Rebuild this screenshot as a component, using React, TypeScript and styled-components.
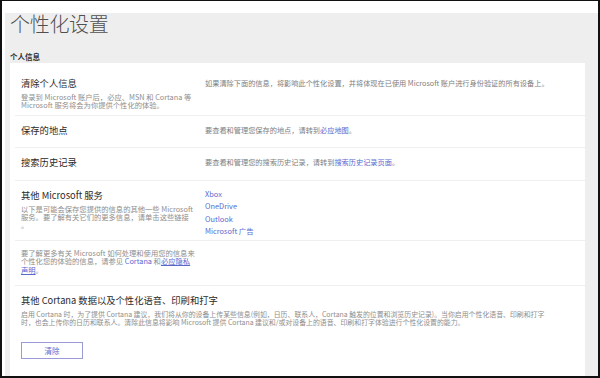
import React from "react";
import styled, { createGlobalStyle } from "styled-components";

const Global = createGlobalStyle`
  html, body { margin: 0; padding: 0; background: #fff; }
  body { font-family: "Noto Sans CJK SC", "Noto Sans", sans-serif; }
  * { box-sizing: border-box; }
`;

const Frame = styled.div`
  width: 600px;
  height: 378px;
  overflow: hidden;
  border-style: solid;
  border-color: #111;
  border-width: 1px 2px 2px 2px;
  background: #fff;
  padding: 12px 0 0 3px;
  display: flex;
`;

const Canvas = styled.div`
  flex: 1;
  background: #eeeeee;
  padding: 0 13px 0 5px;
  display: flex;
  flex-direction: column;
`;

const Title = styled.h1`
  margin: 0;
  font-size: 20px;
  line-height: 22px;
  font-weight: 300;
  color: #505050;
  letter-spacing: -0.3px;
`;

const Section = styled.div`
  margin-top: 17px;
  font-size: 7.5px;
  line-height: 10px;
  font-weight: 700;
  color: #333;
`;

const Panel = styled.div`
  margin-top: 1px;
  flex: 1;
  background: #fff;
  padding: 6px 0 0 5px;
`;

const Row = styled.div<{ $pb: number; $last?: boolean }>`
  display: grid;
  grid-template-columns: 184px 1fr;
  padding: 8px 0 ${(p) => p.$pb}px 6px;
  border-bottom: ${(p) => (p.$last ? "none" : "1px solid #efefef")};
`;

const FullRow = styled(Row)`
  grid-template-columns: 1fr;
`;

const RowTitle = styled.div`
  font-size: 9.3px;
  line-height: 12px;
  color: #2a2a2a;
  white-space: nowrap;
`;

const Desc = styled.div<{ $size?: number }>`
  margin-top: 4px;
  font-size: ${(p) => p.$size ?? 7.3}px;
  line-height: 8px;
  color: #8e8e8e;
  white-space: nowrap;
`;

const Note = styled.div`
  font-size: 7.3px;
  line-height: 8.5px;
  color: #8e8e8e;
  white-space: nowrap;
`;

const Side = styled.div`
  font-size: 7.2px;
  line-height: 12px;
  color: #7e7e7e;
  white-space: nowrap;
`;

const LinkList = styled.div`
  display: flex;
  flex-direction: column;
  font-size: 7.4px;
  line-height: 12.4px;
  margin-top: -1px;
`;

const Link = styled.a<{ $u?: boolean }>`
  color: #5868cf;
  text-decoration: ${(p) => (p.$u ? "underline" : "none")};
  cursor: pointer;
`;

const Button = styled.button`
  margin-top: 16px;
  width: 62px;
  height: 17px;
  border: 1px solid #9a9ad6;
  background: #fff;
  color: #5868cf;
  font-family: inherit;
  font-size: 7.5px;
  line-height: 15px;
  padding: 0;
`;

export default function App() {
  return (
    <>
      <Global />
      <Frame>
        <Canvas>
          <Title>个性化设置</Title>
          <Section>个人信息</Section>
          <Panel>
            <Row $pb={6}>
              <div>
                <RowTitle>清除个人信息</RowTitle>
                <Desc>
                  登录到 Microsoft 账户后，必应、MSN 和 Cortana 等
                  <br />
                  Microsoft 服务将会为你提供个性化的体验。
                </Desc>
              </div>
              <Side>
                如果清除下面的信息，将影响此个性化设置，并将体现在已使用 Microsoft 账户进行身份验证的所有设备上。
              </Side>
            </Row>
            <Row $pb={11}>
              <RowTitle>保存的地点</RowTitle>
              <Side>
                要查看和管理您保存的地点，请转到<Link>必应地图</Link>。
              </Side>
            </Row>
            <Row $pb={12}>
              <RowTitle>搜索历史记录</RowTitle>
              <Side>
                要查看和管理您的搜索历史记录，请转到<Link>搜索历史记录页面</Link>。
              </Side>
            </Row>
            <Row $pb={2}>
              <div>
                <RowTitle>其他 Microsoft 服务</RowTitle>
                <Desc>
                  以下是可能会保存您提供的信息的其他一些 Microsoft
                  <br />
                  服务。要了解有关它们的更多信息，请单击这些链接
                  <br />。
                </Desc>
              </div>
              <LinkList>
                <Link>Xbox</Link>
                <Link>OneDrive</Link>
                <Link>Outlook</Link>
                <Link>Microsoft 广告</Link>
              </LinkList>
            </Row>
            <FullRow $pb={11}>
              <Note>
                要了解更多有关 Microsoft 如何处理和使用您的信息来
                <br />
                个性化您的体验的信息，请参见 <Link>Cortana</Link> 和<Link $u>必应隐私</Link>
                <br />
                <Link $u>声明</Link>。
              </Note>
            </FullRow>
            <FullRow $pb={15} $last>
              <div>
                <RowTitle>其他 Cortana 数据以及个性化语音、印刷和打字</RowTitle>
                <Desc $size={6.9}>
                  启用 Cortana 时，为了提供 Cortana 建议，我们将从你的设备上传某些信息(例如，日历、联系人，Cortana 触发的位置和浏览历史记录)。当你启用个性化语音、印刷和打字
                  <br />
                  时，也会上传你的日历和联系人。清除此信息将影响 Microsoft 提供 Cortana 建议和/或对设备上的语音、印刷和打字体验进行个性化设置的能力。
                </Desc>
                <Button>清除</Button>
              </div>
            </FullRow>
          </Panel>
        </Canvas>
      </Frame>
    </>
  );
}
